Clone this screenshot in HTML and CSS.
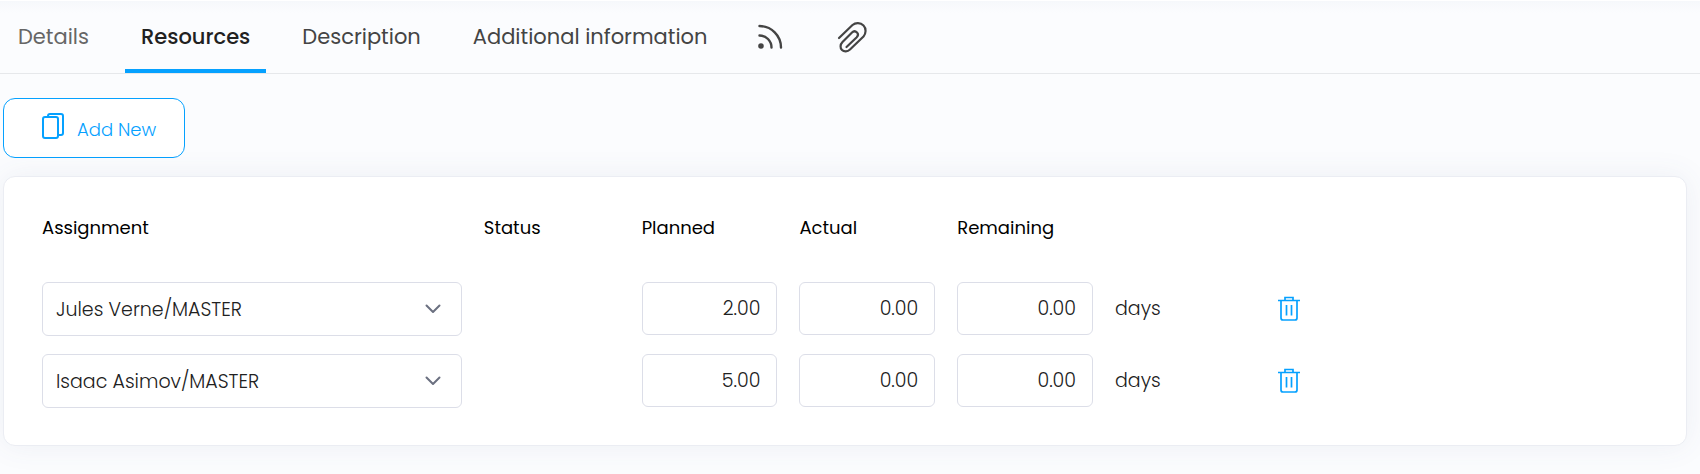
FILE: index.html
```html
<!DOCTYPE html>
<html lang="en">
<head>
    <meta charset="UTF-8">
    <meta name="viewport" content="width=device-width, initial-scale=1.0">
    <title>Resources</title>
    <link rel="stylesheet" href="styles.css">
</head>
<body>
    <nav class="tabs">
        <a href="#details" class="tab muted">Details</a>
        <a href="#resources" class="tab active">Resources</a>
        <a href="#description" class="tab">Description</a>
        <a href="#additional" class="tab">Additional information</a>
        <a href="#feed" class="tab tab-icon" aria-label="Feed">
            <svg width="32" height="32" viewBox="0 0 32 32" fill="none" stroke="currentColor" stroke-width="2.4" stroke-linecap="round">
                <circle cx="6" cy="25" r="2.800" fill="currentColor" stroke="none"/>
                <path d="M4.500 14.500A12 12 0 0 1 16.500 26.500"/>
                <path d="M4.500 5A21.500 21.500 0 0 1 26 26.500"/>
            </svg>
        </a>
        <a href="#attachments" class="tab tab-icon" aria-label="Attachments">
            <svg width="32" height="32" viewBox="0 0 32 32" fill="none" stroke="currentColor" stroke-width="2.2" stroke-linecap="round" stroke-linejoin="round">
                <path d="M2 17L15.500 4C18.500 1.500 23.500 1.500 26.500 4.500C29.500 7.500 29 12.500 26.500 15.500L13 28.500C10.500 31 7 31 5 29C3 27 3 23.500 5.500 21L15 11.500C16.500 10 18.500 10 20 11.500C21.500 13 21 15 19.500 16.500L9.500 26"/>
            </svg>
        </a>
    </nav>

    <main class="content">
        <button type="button" class="add-btn">
            <svg width="24" height="28" viewBox="0 0 24 28" fill="none" stroke="currentColor" stroke-width="2" stroke-linejoin="round">
                <rect x="2" y="5" width="15" height="21" rx="2"/>
                <path d="M7 5V4a2 2 0 0 1 2-2h11a2 2 0 0 1 2 2v17a2 2 0 0 1-2 2h-3"/>
            </svg>
            <span>Add New</span>
        </button>

        <section class="card">
            <table class="resources">
                <thead>
                    <tr>
                        <th class="col-assignment">Assignment</th>
                        <th class="col">Status</th>
                        <th class="col">Planned</th>
                        <th class="col">Actual</th>
                        <th class="col">Remaining</th>
                        <th class="col"></th>
                        <th></th>
                    </tr>
                </thead>
                <tbody>
                    <tr>
                        <td>
                            <div class="select-wrap">
                                <select aria-label="Assignment">
                                    <option>Jules Verne/MASTER</option>
                                </select>
                                <svg class="chevron" width="16" height="10" viewBox="0 0 16 10" fill="none" stroke="currentColor" stroke-width="2" stroke-linecap="round" stroke-linejoin="round">
                                    <path d="M1.500 1.500L8 8l6.500-6.500"/>
                                </svg>
                            </div>
                        </td>
                        <td></td>
                        <td><input type="text" aria-label="Planned" value="2.00"></td>
                        <td><input type="text" aria-label="Actual" value="0.00"></td>
                        <td><input type="text" aria-label="Remaining" value="0.00"></td>
                        <td class="unit">days</td>
                        <td>
                            <button type="button" class="delete-btn" aria-label="Delete">
                                <svg width="24" height="26" viewBox="0 0 24 26" fill="none" stroke="currentColor" stroke-width="1.700">
                                    <path d="M1 4.500h22M8 4.500V1.500h8v3M4 4.500v17.500a2 2 0 0 0 2 2h12a2 2 0 0 0 2-2V4.500M9.500 9V19.500M14.500 9V19.500"/>
                                </svg>
                            </button>
                        </td>
                    </tr>
                    <tr>
                        <td>
                            <div class="select-wrap">
                                <select aria-label="Assignment">
                                    <option>Isaac Asimov/MASTER</option>
                                </select>
                                <svg class="chevron" width="16" height="10" viewBox="0 0 16 10" fill="none" stroke="currentColor" stroke-width="2" stroke-linecap="round" stroke-linejoin="round">
                                    <path d="M1.500 1.500L8 8l6.500-6.500"/>
                                </svg>
                            </div>
                        </td>
                        <td></td>
                        <td><input type="text" aria-label="Planned" value="5.00"></td>
                        <td><input type="text" aria-label="Actual" value="0.00"></td>
                        <td><input type="text" aria-label="Remaining" value="0.00"></td>
                        <td class="unit">days</td>
                        <td>
                            <button type="button" class="delete-btn" aria-label="Delete">
                                <svg width="24" height="26" viewBox="0 0 24 26" fill="none" stroke="currentColor" stroke-width="1.700">
                                    <path d="M1 4.500h22M8 4.500V1.500h8v3M4 4.500v17.500a2 2 0 0 0 2 2h12a2 2 0 0 0 2-2V4.500M9.500 9V19.500M14.500 9V19.500"/>
                                </svg>
                            </button>
                        </td>
                    </tr>
                </tbody>
            </table>
        </section>
    </main>
</body>
</html>
```

FILE: styles.css
```css
* {
    box-sizing: border-box;
}

body {
    margin: 0;
    background-color: #fbfcfe;
    color: #212121;
    font-family: Poppins, Inter, sans-serif;
    font-size: 19px;
    font-weight: 300;
}

/* Tabs */
.tabs {
    display: flex;
    gap: 20px;
    padding-left: 2px;
    border-top: 1px solid #fff;
    border-bottom: 1px solid #e6e8eb;
    background: linear-gradient(#f6f8fb, #fbfcfe 12px);
}

.tab {
    display: flex;
    align-items: center;
    height: 72px;
    padding: 3px 16px 0;
    border-bottom: 4px solid transparent;
    color: #444;
    font-size: 21px;
    font-weight: 400;
    text-decoration: none;
    white-space: nowrap;
}

.tab.muted {
    color: #666;
}

.tab.active {
    color: #212121;
    font-weight: 500;
    border-bottom-color: #05a1ff;
}

.tab-icon {
    padding: 3px 18px 0 12px;
}

/* Content */
.content {
    padding: 24px 13px 28px 3px;
}

.add-btn {
    display: flex;
    align-items: center;
    gap: 12px;
    height: 60px;
    padding: 0 28px 0 37px;
    border: 1px solid #05a1ff;
    border-radius: 12px;
    background-color: #fff;
    color: #05a1ff;
    font: inherit;
    font-size: 18px;
    cursor: pointer;
}

.add-btn svg {
    margin-bottom: 4px;
}

.add-btn span {
    padding-top: 3px;
}

.card {
    margin-top: 18px;
    padding: 30px 66px 19px 38px;
    border: 1px solid #ebedf3;
    border-radius: 12px;
    background-color: #fff;
    box-shadow: 0 0 30px rgba(76, 87, 125, 0.08);
}

.resources {
    width: 100%;
    table-layout: fixed;
    border-collapse: collapse;
}

.resources th {
    height: 75px;
    padding: 7px 0 0;
    color: #000;
    font-size: 18px;
    font-weight: 400;
    text-align: left;
    vertical-align: top;
}

.resources td {
    height: 72px;
    padding: 0 22px 0 0;
    vertical-align: top;
}

.resources .unit {
    line-height: 53px;
}

.col-assignment {
    width: 28%;
}

.col {
    width: 10%;
}

.select-wrap {
    position: relative;
}

select,
input {
    display: block;
    width: 100%;
    height: 54px;
    border: 1px solid #dcdee8;
    border-radius: 6px;
    background-color: #fff;
    color: #212121;
    font: inherit;
}

select {
    padding: 0 40px 0 13px;
    appearance: none;
}

input {
    height: 53px;
    padding: 0 16px;
    text-align: right;
}

.chevron {
    position: absolute;
    top: 22px;
    right: 21px;
    color: #6b7080;
    pointer-events: none;
}

.delete-btn {
    display: flex;
    align-items: center;
    height: 53px;
    padding: 0 4px;
    border: 0;
    background: none;
    color: #05a1ff;
    cursor: pointer;
}
```
